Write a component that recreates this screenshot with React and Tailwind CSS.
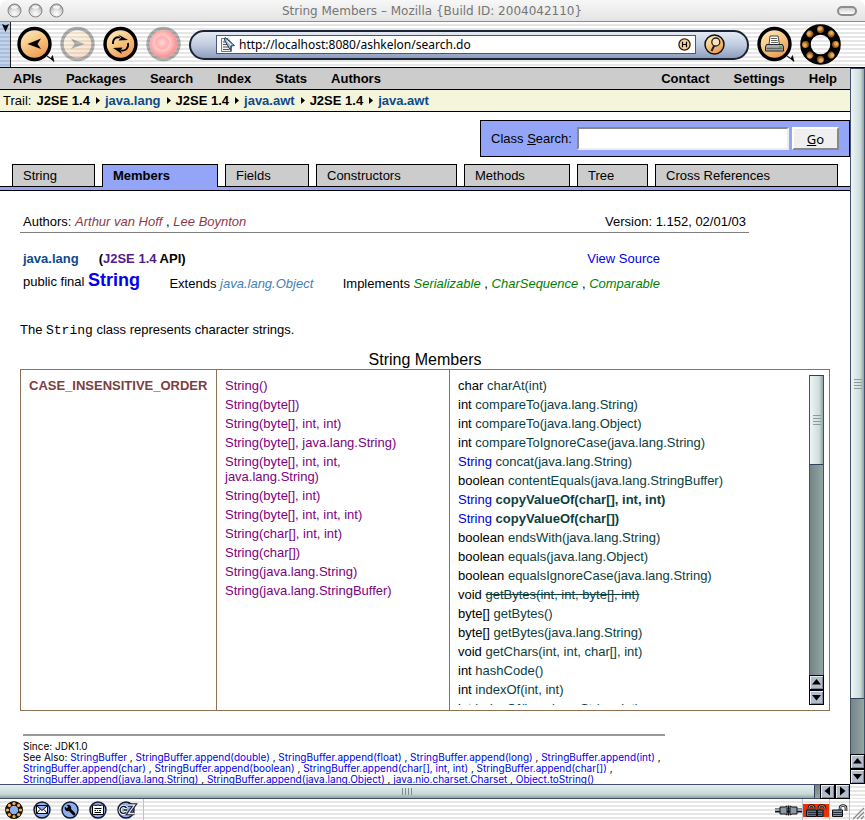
import React from "react";

const stripes =
  "bg-[repeating-linear-gradient(to_bottom,#ffffff_0,#ffffff_2px,#e6e6e6_2px,#e6e6e6_4px)]";

function TrafficLight() {
  return (
    <button type="button" aria-label="Window control" className="size-[15px]">
      <svg viewBox="0 0 15 15" className="size-full">
        <defs>
          <radialGradient id="light" cx="50%" cy="75%" r="65%">
            <stop offset="0" stopColor="#ffffff" />
            <stop offset="0.6" stopColor="#d9d9d9" />
            <stop offset="1" stopColor="#a5a5a5" />
          </radialGradient>
        </defs>
        <circle cx="7.5" cy="7.5" r="6.5" fill="url(#light)" stroke="#858585" />
        <ellipse cx="7.5" cy="4" rx="3.5" ry="1.8" fill="#fff" opacity="0.8" />
      </svg>
    </button>
  );
}

function TitleBar() {
  return (
    <header className="flex h-[22px] shrink-0 items-center rounded-t-lg border-b border-[#8e8e8e] bg-linear-to-b from-[#f7f7f7] to-[#e4e4e4] pr-2 pl-[7px]">
      <div className="flex w-[60px] gap-[6px]">
        <TrafficLight />
        <TrafficLight />
        <TrafficLight />
      </div>
      <h1 className="flex-1 text-center font-['DejaVu_Sans',sans-serif] text-[12px] leading-5 whitespace-nowrap text-[#757575]">
        String Members – Mozilla {"{"}Build ID: 2004042110{"}"}
      </h1>
      <div className="flex w-[60px] justify-end">
        <button
          type="button"
          aria-label="Toggle toolbar"
          className="h-[10px] w-5 rounded-full border-2 border-[#8c8c8c] bg-linear-to-b from-[#cfcfcf] to-white"
        />
      </div>
    </header>
  );
}

function RoundButton({ label, faded, red, menu, children }) {
  return (
    <button type="button" aria-label={label} className="size-[35px] shrink-0">
      <svg viewBox="0 0 35 35" className="size-full overflow-visible">
        <defs>
          <linearGradient id="amber" x1="0" y1="0" x2="0.6" y2="1">
            <stop offset="0" stopColor="#fff3d0" />
            <stop offset="0.5" stopColor="#f8c987" />
            <stop offset="1" stopColor="#ec9a55" />
          </linearGradient>
          <radialGradient id="stop" cx="45%" cy="45%">
            <stop offset="0" stopColor="#ffd6d6" />
            <stop offset="0.45" stopColor="#ffadad" />
            <stop offset="0.55" stopColor="#ffc9c9" />
            <stop offset="1" stopColor="#f99797" />
          </radialGradient>
        </defs>
        <g opacity={faded ? 0.3 : 1}>
          <circle cx="17.5" cy="17" r="15.5" fill="url(#amber)" stroke="#000" strokeWidth="3.4" />
          {children}
        </g>
        {red && <circle cx="17.5" cy="17" r="13.8" fill="url(#stop)" />}
        {menu && <path d="M30 29 L37 34.500 L35.500 28.500 L34 31.500 Z" fill="#000" stroke="#000" strokeWidth="0.600" />}
      </svg>
    </button>
  );
}

function Throbber() {
  const bulbs = [0, 45, 90, 135, 180, 225, 270, 315];
  return (
    <svg viewBox="0 0 41 41" className="size-[41px] shrink-0">
      <defs>
        <radialGradient id="bulb" cx="40%" cy="35%">
          <stop offset="0" stopColor="#f5bd72" />
          <stop offset="0.7" stopColor="#cf8a3a" />
          <stop offset="1" stopColor="#8f581c" />
        </radialGradient>
      </defs>
      <circle cx="20.5" cy="20.5" r="15" fill="none" stroke="#000" strokeWidth="10.5" />
      {bulbs.map((a) => (
        <circle key={a} cx="20.5" cy="5.5" r="3.4" fill="url(#bulb)" transform={`rotate(${a} 20.5 20.5)`} />
      ))}
    </svg>
  );
}

function Toolbar() {
  return (
    <div className={`flex h-[46px] shrink-0 items-center border-b border-black pr-6 ${stripes}`}>
      <button
        type="button"
        aria-label="Collapse toolbar"
        className="flex h-full w-[11px] shrink-0 justify-center border-r border-[#222] bg-[repeating-linear-gradient(to_bottom,#c3d3ea_0,#c3d3ea_2px,#a9bedb_2px,#a9bedb_4px)] pt-[2px]"
      >
        <svg viewBox="0 0 7 8" className="h-2 w-[7px]">
          <path d="M0 0 L3.5 1.5 L7 0 L3.5 8 Z" fill="#000" />
        </svg>
      </button>
      <div className="flex min-w-0 flex-1 items-center gap-2 pl-[6px]">
        <RoundButton label="Back" menu>
          <path d="M10.5 17 L24 11.5 L20.5 17 L24 22 Z" fill="#000" />
        </RoundButton>
        <RoundButton label="Forward" faded>
          <path d="M24.5 17 L11 11.5 L14.5 17 L11 22 Z" fill="#000" />
        </RoundButton>
        <RoundButton label="Reload">
          <path d="M10 17 C9.500 12 13 9.500 17 10.500 M25 16 C26 21.500 22 24.500 18 23.500" fill="none" stroke="#000" strokeWidth="1.8" />
          <path d="M15.500 7.500 L25 13 L15.500 13.500 L18 10.500 Z M19.500 20.500 L10 21 L19 27 L17.500 23.500 Z" fill="#000" />
        </RoundButton>
        <RoundButton label="Stop" faded red />
        <form
          className="flex h-[30px] min-w-0 flex-1 items-center rounded-full border-2 border-[#1c2433] bg-linear-to-b from-[#e4eaf4] via-[#c1cce0] to-[#8c9dbd] pr-[22px] pl-[25px]"
          onSubmit={(e) => e.preventDefault()}
        >
          <div className="flex h-[19px] min-w-0 flex-1 items-center border border-[#4a5578] bg-white pr-1 pl-[3px]">
            <svg viewBox="0 0 16 16" className="size-4 shrink-0">
              <path d="M1.5 1.5 H8 L11.5 6 V14.500 H1.500 Z" fill="#f1f1f1" stroke="#777" />
              <path d="M3 5 H7 M3 7.500 H8 M3 10 H9 M3 12.500 H9" stroke="#555" />
              <path d="M5 .5 L14.500 8.500 L11 9 L10.500 13.500 L4.500 3 Z" fill="#9fc2df" stroke="#223c55" />
              <path d="M7 3.500 L11 8" stroke="#fff" />
            </svg>
            <input
              aria-label="Location"
              defaultValue="http://localhost:8080/ashkelon/search.do"
              className="min-w-0 flex-1 bg-transparent pl-[3px] font-['Noto_Sans',sans-serif] text-[12px] leading-4 text-black outline-none"
            />
            <button type="button" aria-label="History" className="size-[13px] shrink-0">
              <svg viewBox="0 0 13 13" className="size-full">
                <circle cx="6.5" cy="6.5" r="5.6" fill="#f8cf8f" stroke="#222" strokeWidth="1.3" />
                <path d="M4.500 3.800 V9.200 M8.500 3.800 V9.200 M4.500 6.500 H8.500" stroke="#000" strokeWidth="1.2" />
              </svg>
            </button>
          </div>
          <button type="submit" aria-label="Search" className="ml-2 size-[21px] shrink-0">
            <svg viewBox="0 0 21 21" className="size-full">
              <circle cx="10.5" cy="10.5" r="9.500" fill="url(#amber)" stroke="#111" strokeWidth="1.500" />
              <circle cx="11.800" cy="8" r="4" fill="#fbe3bb" stroke="#222" strokeWidth="1.300" />
              <path d="M10.300 11.500 L7.500 17" stroke="#222" strokeWidth="2" />
            </svg>
          </button>
        </form>
        <RoundButton label="Print" menu>
          <path d="M13 9 H21 L22.500 18 H12 Z" fill="#fff" stroke="#333" strokeWidth="0.900" />
          <path d="M14 11.500 H20 M14 13.500 H20.500 M14 15.500 H21" stroke="#555" strokeWidth="0.900" />
          <path d="M9.500 17.500 H25.500 L26.500 20 V24 H8.500 V20 Z" fill="#a9b0ad" stroke="#222" strokeWidth="1" />
          <path d="M9.500 21.500 H25.500" stroke="#5c6663" strokeWidth="1.500" />
          <path d="M22 20 H25" stroke="#37b24d" strokeWidth="1.500" />
        </RoundButton>
        <Throbber />
      </div>
    </div>
  );
}

const arrowPaths = {
  up: "M7.5 4 L12 9.5 H3 Z",
  down: "M7.5 10.500 L12 5 H3 Z",
  left: "M4.500 7 L10 2.500 V11.500 Z",
  right: "M10.500 7 L5 2.500 V11.500 Z",
};

function ArrowButton({ dir }) {
  return (
    <button
      type="button"
      aria-label={`Scroll ${dir}`}
      className="size-[15px] shrink-0 border border-black bg-[#b3bccb] shadow-[inset_1px_1px_0_#e8ecf2,inset_-1px_-1px_0_#7c879c]"
    >
      <svg viewBox="1 1 13 13" className="size-[13px]">
        <path d={arrowPaths[dir]} fill="#000" />
      </svg>
    </button>
  );
}

function Grip({ vertical }) {
  return vertical ? (
    <span className="flex flex-col gap-[2px]">
      <span className="h-px w-2 bg-[#8b9c9c]" />
      <span className="h-px w-2 bg-[#8b9c9c]" />
      <span className="h-px w-2 bg-[#8b9c9c]" />
      <span className="h-px w-2 bg-[#8b9c9c]" />
    </span>
  ) : (
    <span className="flex gap-[2px]">
      <span className="h-[7px] w-px bg-[#7d8d8d]" />
      <span className="h-[7px] w-px bg-[#7d8d8d]" />
      <span className="h-[7px] w-px bg-[#7d8d8d]" />
      <span className="h-[7px] w-px bg-[#7d8d8d]" />
    </span>
  );
}

function VerticalBar({ thumb }) {
  return (
    <div className="flex w-[15px] shrink-0 flex-col">
      <div className="min-h-0 flex-1 border-x border-[#42506e] bg-linear-to-r from-[#748585] to-[#94a5a5]">
        <div
          className={`flex items-center justify-center border-y border-[#33405c] bg-linear-to-r from-[#eef4f4] via-[#cfdddd] via-70% to-[#8fa3a3] ${thumb}`}
        >
          <Grip vertical />
        </div>
      </div>
      <ArrowButton dir="up" />
      <ArrowButton dir="down" />
    </div>
  );
}

function HorizontalBar() {
  return (
    <div className="flex h-[15px] shrink-0">
      <div className="min-w-0 flex-1 border-y border-[#42506e] bg-linear-to-b from-[#748585] to-[#94a5a5]">
        <div className="flex h-full w-[99.4%] items-center justify-center border-r border-[#33405c] bg-linear-to-b from-[#e6efef] via-[#c9d8d8] via-70% to-[#8fa3a3]">
          <Grip />
        </div>
      </div>
      <ArrowButton dir="left" />
      <ArrowButton dir="right" />
      <div className={`w-[15px] ${stripes}`} />
    </div>
  );
}

function SiteNav() {
  return (
    <nav className="flex h-[22px] items-center justify-between border-b border-black bg-[#cccccc] px-[13px] font-bold">
      <div className="flex gap-6">
        {["APIs", "Packages", "Search", "Index", "Stats", "Authors"].map((t) => (
          <a key={t} href="#nav">{t}</a>
        ))}
      </div>
      <div className="flex gap-6">
        {["Contact", "Settings", "Help"].map((t) => (
          <a key={t} href="#nav">{t}</a>
        ))}
      </div>
    </nav>
  );
}

function Trail() {
  const rest = ["java.lang", "J2SE 1.4", "java.awt", "J2SE 1.4", "java.awt"];
  return (
    <div className="flex h-[22px] items-center border-b border-black bg-[#f5f5dc] pl-[3px]">
      <span className="mr-[5px]">Trail:</span>
      <a href="#trail" className="font-bold">J2SE 1.4</a>
      {rest.map((t, i) => (
        <React.Fragment key={i}>
          <svg viewBox="0 0 4 7" className="mr-[5px] ml-[6px] h-[7px] w-1">
            <path d="M0 0 L4 3.500 L0 7 Z" fill="#000" />
          </svg>
          <a href="#trail" className={t.startsWith("java") ? "font-bold text-[#0b4a8c]" : "font-bold"}>{t}</a>
        </React.Fragment>
      ))}
    </div>
  );
}

function ClassSearch() {
  return (
    <form
      className="mt-2 ml-auto flex h-[37px] w-[370px] items-center border border-black bg-[#94a5f7] pl-[10px]"
      onSubmit={(e) => e.preventDefault()}
    >
      <label htmlFor="class-search" className="mr-[5px] whitespace-nowrap">
        Class <u>S</u>earch:
      </label>
      <input
        id="class-search"
        className="h-[23px] min-w-0 flex-1 border-2 border-t-[#888] border-r-[#eee] border-b-[#eee] border-l-[#888] bg-white px-1 outline-none"
      />
      <button
        type="submit"
        className="mr-[10px] ml-[3px] h-[23px] w-[47px] border-2 border-t-white border-r-[#888] border-b-[#888] border-l-white bg-[#efefef] font-['Noto_Sans',sans-serif] text-[13px] leading-4"
      >
        <u>G</u>o
      </button>
    </form>
  );
}

const tabs = [
  ["String", "w-[83px]"],
  ["Members", "w-[116px]"],
  ["Fields", "w-[84px]"],
  ["Constructors", "w-[141px]"],
  ["Methods", "w-[106px]"],
  ["Tree", "w-[71px]"],
  ["Cross References", "w-[183px]"],
];

function Tabs() {
  return (
    <div className="mt-[7px]">
      <nav className="flex items-start gap-[7px] pr-3 pl-3">
        {tabs.map(([t, w]) => (
          <a
            key={t}
            href="#tab"
            className={`border border-b-0 border-black pl-[10px] leading-[21px] whitespace-nowrap ${w} ${
              t === "Members" ? "relative -mb-px h-[23px] bg-[#94a5f7] font-bold" : "h-[22px] bg-[#cccccc]"
            }`}
          >
            {t}
          </a>
        ))}
      </nav>
      <div className="h-[5px] border-y border-black bg-[#94a5f7]" />
    </div>
  );
}

const constructors = [
  "String()",
  "String(byte[])",
  "String(byte[], int, int)",
  "String(byte[], java.lang.String)",
  "String(byte[], int, int, java.lang.String)",
  "String(byte[], int)",
  "String(byte[], int, int, int)",
  "String(char[], int, int)",
  "String(char[])",
  "String(java.lang.String)",
  "String(java.lang.StringBuffer)",
];

const methods = [
  ["char", "charAt(int)"],
  ["int", "compareTo(java.lang.String)"],
  ["int", "compareTo(java.lang.Object)"],
  ["int", "compareToIgnoreCase(java.lang.String)"],
  ["String", "concat(java.lang.String)"],
  ["boolean", "contentEquals(java.lang.StringBuffer)"],
  ["String", "copyValueOf(char[], int, int)", "font-bold"],
  ["String", "copyValueOf(char[])", "font-bold"],
  ["boolean", "endsWith(java.lang.String)"],
  ["boolean", "equals(java.lang.Object)"],
  ["boolean", "equalsIgnoreCase(java.lang.String)"],
  ["void", "getBytes(int, int, byte[], int)", "line-through"],
  ["byte[]", "getBytes()"],
  ["byte[]", "getBytes(java.lang.String)"],
  ["void", "getChars(int, int, char[], int)"],
  ["int", "hashCode()"],
  ["int", "indexOf(int, int)"],
  ["int", "indexOf(java.lang.String, int)"],
];

function MembersTable() {
  return (
    <table className="mt-3 w-full border-collapse">
      <caption className="text-[16px] leading-[19px]">String Members</caption>
      <tbody>
        <tr className="align-top">
          <td className="w-[196px] border border-[#8f7055] px-2 pt-2">
            <a href="#member" className="font-bold text-[#7d4040]">CASE_INSENSITIVE_ORDER</a>
          </td>
          <td className="w-[233px] border border-[#8f7055] pt-2 pr-4 pl-2">
            <ul className="flex flex-col gap-1">
              {constructors.map((c) => (
                <li key={c}>
                  <a href="#member" className="text-[#800080]">{c}</a>
                </li>
              ))}
            </ul>
          </td>
          <td className="border border-[#8f7055] py-[5px] pr-[5px] pl-2">
            <div className="flex h-[330px] overflow-hidden">
              <ul className="flex min-w-0 flex-1 flex-col gap-1 pt-[3px]">
                {methods.map(([type, sig, style = ""]) => (
                  <li key={sig}>
                    {type === "String" ? <a href="#type" className="text-[#0000dd]">String</a> : type}{" "}
                    <a href="#member" className={`text-[#0b4040] ${style}`}>{sig}</a>
                  </li>
                ))}
              </ul>
              <VerticalBar thumb="h-[90px]" />
            </div>
          </td>
        </tr>
      </tbody>
    </table>
  );
}

const seeAlso = [
  ["StringBuffer", "StringBuffer.append(double)", "StringBuffer.append(float)", "StringBuffer.append(long)", "StringBuffer.append(int)"],
  ["StringBuffer.append(char)", "StringBuffer.append(boolean)", "StringBuffer.append(char[], int, int)", "StringBuffer.append(char[])"],
  ["StringBuffer.append(java.lang.String)", "StringBuffer.append(java.lang.Object)", "java.nio.charset.Charset", "Object.toString()"],
];

function Details() {
  return (
    <main className="px-5">
      <div className="mt-[23px] flex w-[90%] justify-between border-b border-[#808080] px-[3px] pb-[3px]">
        <p>
          Authors: <a href="#author" className="text-[#8c3a4a] italic">Arthur van Hoff</a> ,{" "}
          <a href="#author" className="text-[#8c3a4a] italic">Lee Boynton</a>
        </p>
        <p>Version: 1.152, 02/01/03</p>
      </div>
      <div className="mt-[18px] flex w-[640px] max-w-full justify-between pl-[3px] font-bold">
        <div className="flex gap-5">
          <a href="#pkg" className="text-[#0b4a8c]">java.lang</a>
          <p>
            (<a href="#api" className="text-[#551a8b]">J2SE 1.4</a> API)
          </p>
        </div>
        <a href="#source" className="font-normal text-[#0000ee]">View Source</a>
      </div>
      <div className="mt-1 flex w-[640px] max-w-full items-end justify-between pl-[3px]">
        <p className="leading-5">
          public final <a href="#class" className="text-[18px] font-bold text-[#0000ee]">String</a>
        </p>
        <p className="pb-px">
          Extends <a href="#super" className="text-[#4682b4] italic">java.lang.Object</a>
        </p>
        <p className="pb-px">
          Implements <a href="#if" className="text-[#008000] italic">Serializable</a> ,{" "}
          <a href="#if" className="text-[#008000] italic">CharSequence</a> ,{" "}
          <a href="#if" className="text-[#008000] italic">Comparable</a>
        </p>
      </div>
      <p className="mt-[30px]">
        The <code className="font-['Liberation_Mono',monospace] text-[13px]">String</code> class represents character strings.
      </p>
      <MembersTable />
      <div className="mx-[3px] mt-[23px] w-[642px] max-w-full border-t-2 border-[#999] pt-[5px] font-['Inter','Liberation_Sans',sans-serif] text-[10px] leading-[11px] whitespace-nowrap">
        <p>Since: JDK1.0</p>
        {seeAlso.map((line, i) => (
          <p key={i}>
            {i === 0 && "See Also: "}
            {line.map((s) => (
              <React.Fragment key={s}>
                <a href="#see" className="text-[#0000ee]">{s}</a>
                {s === "Object.toString()" ? "" : " , "}
              </React.Fragment>
            ))}
          </p>
        ))}
      </div>
    </main>
  );
}

function StatusIcon({ label, children }) {
  return (
    <button type="button" aria-label={label} className="size-[18px]">
      <svg viewBox="0 0 18 18" className="size-full overflow-visible">
        <circle cx="9" cy="9" r="8" fill="#8eaef0" stroke="#10182c" strokeWidth="1.400" />
        {children}
      </svg>
    </button>
  );
}

function StatusBar() {
  const beads = [0, 45, 90, 135, 180, 225, 270, 315];
  return (
    <footer className={`flex h-[21px] shrink-0 items-stretch ${stripes}`}>
      <div className="flex items-center gap-[10px] border-r border-[#b9c3d0] pr-2 pl-[5px]">
        <StatusIcon label="Navigator">
          <circle cx="9" cy="9" r="6.500" fill="none" stroke="#1a1206" strokeWidth="4.500" />
          {beads.map((a) => (
            <circle key={a} cx="9" cy="2.500" r="1.600" fill="#f0b050" transform={`rotate(${a} 9 9)`} />
          ))}
        </StatusIcon>
        <StatusIcon label="Mail">
          <path d="M3.500 4.500 H14.500 V12.500 H3.500 Z M3.500 4.500 L9 9.500 L14.500 4.500 M3.500 12.500 L7 8.500 M14.500 12.500 L11 8.500" fill="#fff" stroke="#000" />
        </StatusIcon>
        <StatusIcon label="Composer">
          <path d="M7.500 7.500 L13 13" stroke="#000" strokeWidth="3" strokeLinecap="round" />
          <path d="M4 5.500 L6 7.500 L7.500 6 L5.500 4 A3.300 3.300 0 1 1 4 5.500 Z" fill="#000" />
        </StatusIcon>
        <StatusIcon label="Address book">
          <path d="M3.500 4.500 L5 4 L7 4.500 L9 4 L11 4.500 L13 4 L14.500 4.500 V13.500 H3.500 Z" fill="#fff" stroke="#000" />
          <path d="M5.500 7.500 H12.500 M5.500 9.500 H7 M8 9.500 H9 M10 9.500 H12 M5.500 11.500 H12" stroke="#000" />
        </StatusIcon>
        <StatusIcon label="Chat">
          <path d="M9.500 7 A3.500 3.500 0 1 0 9 11.500 M6.500 9 H10" fill="none" stroke="#fff" strokeWidth="3" />
          <path d="M9.500 7 A3.500 3.500 0 1 0 9 11.500 M6.500 9 H10" fill="none" stroke="#111" strokeWidth="1.300" />
          <path d="M11 4 H17.500 L11.500 12.500 H17.500" fill="none" stroke="#223" strokeWidth="3.500" />
          <path d="M11 4 H17.500 L11.500 12.500 H17.500" fill="none" stroke="#dfe8fb" strokeWidth="1.300" />
        </StatusIcon>
      </div>
      <div className="flex-1" />
      <svg viewBox="0 0 27 21" className="h-[21px] w-[27px]">
        <path d="M0 11.500 H27" stroke="#111" strokeWidth="4" />
        <path d="M0 11 H27" stroke="#c9d3dd" strokeWidth="1.500" />
        <path d="M5 8 H10 L12 7 V16 L10 15 H5 Z M22 8 H17 L15 7 V16 L17 15 H22 Z" fill="#8b98a8" stroke="#111" />
        <path d="M13.500 6.500 V16.500" stroke="#111" strokeWidth="1.500" />
      </svg>
      <div className="flex w-[28px] items-center border-x border-[#b9c3d0] pt-px">
        <svg viewBox="0 0 26 13" className="h-[13px] w-[26px] bg-[#ee2f00]">
          <path d="M6 6 V4 Q6 1.500 8.500 1.500 Q11 1.500 11 4 V6 M16 6 V4 Q16 1.500 18.500 1.500 Q22 1.500 22 4 V6" fill="none" stroke="#111" strokeWidth="2.500" />
          <path d="M6 6 V4 Q6 1.500 8.500 1.500 Q11 1.500 11 4 V6 M16 6 V4 Q16 1.500 18.500 1.500 Q22 1.500 22 4 V6" fill="none" stroke="#bcc6d0" strokeWidth="0.800" />
          <path d="M3.500 6 H13.500 V12.500 H3.500 Z M14.500 6 H20 V12.500 H14.500 Z" fill="#5d7386" stroke="#111" />
          <path d="M5 8.500 H13 M5 10.500 H13 M15 8.500 H19.500 M15 10.500 H19.500" stroke="#25313d" />
        </svg>
      </div>
      <div className="flex w-5 items-center justify-center border-r border-[#b9c3d0] pt-px">
        <svg viewBox="0 0 17 13" className="h-[13px] w-[17px]">
          <path d="M9 6 V4 Q9 1.500 12 1.500 Q15 1.500 15 4 V7" fill="none" stroke="#111" strokeWidth="2.600" />
          <path d="M9 6 V4 Q9 1.500 12 1.500 Q15 1.500 15 4 V7" fill="none" stroke="#e2e8ee" strokeWidth="0.900" />
          <path d="M1.500 6 H11.500 V12.500 H1.500 Z" fill="#7d93a5" stroke="#111" />
          <path d="M2 8.500 H11 M2 10.500 H11" stroke="#25313d" />
        </svg>
      </div>
      <svg viewBox="0 0 15 21" className="h-[21px] w-[15px]">
        <path d="M3 20 L14 9 M7 20 L14 13 M11 20 L14 17" stroke="#888" strokeWidth="1.200" />
      </svg>
    </footer>
  );
}

export default function App() {
  return (
    <div className="flex h-screen flex-col overflow-hidden bg-white font-['Liberation_Sans',Arial,sans-serif] text-[13px] leading-[15px] text-black">
      <TitleBar />
      <Toolbar />
      <div className="flex min-h-0 flex-1">
        <div className="min-w-0 flex-1 overflow-hidden">
          <SiteNav />
          <Trail />
          <ClassSearch />
          <Tabs />
          <Details />
        </div>
        <VerticalBar thumb="h-[92%]" />
      </div>
      <HorizontalBar />
      <StatusBar />
    </div>
  );
}
